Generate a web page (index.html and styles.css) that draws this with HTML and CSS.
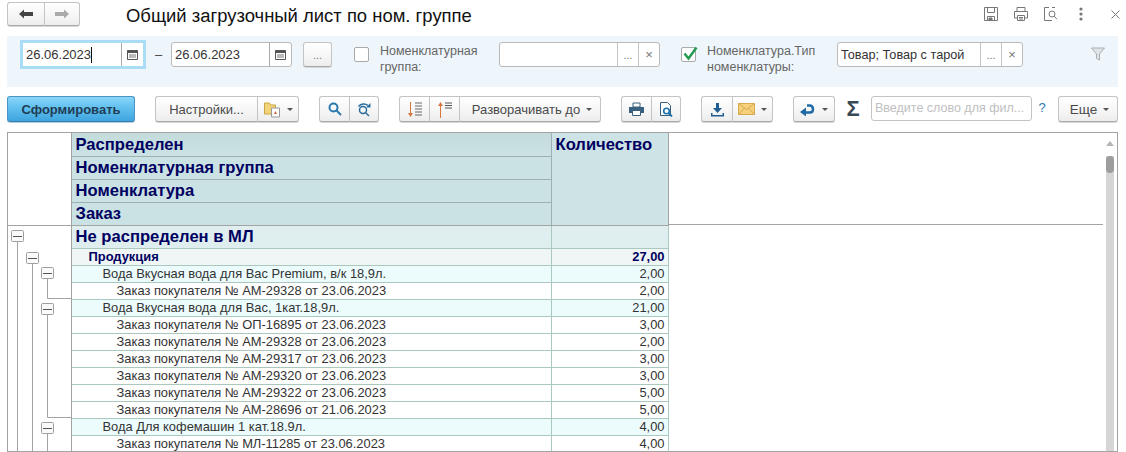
FILE: index.html
```html
<!DOCTYPE html>
<html lang="ru">
<head>
<meta charset="utf-8">
<title>Общий загрузочный лист по ном. группе</title>
<link rel="stylesheet" href="styles.css">
</head>
<body>
<div class="page">
  <header class="titlebar">
    <div class="btn-group nav-group">
      <button class="btn nav-btn"><svg width="14" height="10" viewBox="0 0 14 10"><path d="M0 5l5-4.500V3h9v4H5v2.500z" fill="#444"/></svg></button>
      <button class="btn nav-btn"><svg width="14" height="10" viewBox="0 0 14 10"><path d="M14 5L9 .5V3H0v4h9v2.500z" fill="#aaa"/></svg></button>
    </div>
    <h1 class="title">Общий загрузочный лист по ном. группе</h1>
    <div class="window-tools">
      <svg class="wt wt-save" width="16" height="16" viewBox="0 0 16 16" fill="none" stroke="#777"><path d="M1.500 1.500h13v13h-13z"/><path d="M4.500 1.500v5h7v-5M4.500 14.500v-4h7v4"/><path d="M6 12h3v2H6z" fill="#777"/></svg>
      <svg class="wt wt-print" width="16" height="16" viewBox="0 0 16 16" fill="none" stroke="#777"><path d="M4 5V1.500h8V5M4 12H1.500V5.500h13V12H12"/><path d="M4.500 9.500h7v5h-7z"/><path d="M6 11.500h4M6 13h4"/></svg>
      <svg class="wt wt-find" width="16" height="16" viewBox="0 0 16 16" fill="none" stroke="#777"><path d="M6 1.500H1.500v13H9M9 1.500h3"/><circle cx="9" cy="8" r="3"/><path d="M11.300 10.300l2.700 3"/></svg>
      <svg class="wt wt-more" width="4" height="14" viewBox="0 0 4 14" fill="#777"><circle cx="2" cy="2" r="1.600"/><circle cx="2" cy="7" r="1.600"/><circle cx="2" cy="12" r="1.600"/></svg>
      <svg class="wt wt-close" width="9" height="9" viewBox="0 0 9 9" stroke="#777" stroke-width="1"><path d="M.5.5l8 8M8.500.5l-8 8"/></svg>
    </div>
  </header>

  <section class="filters">
    <div class="field date-field focused">
      <span class="field-value">26.06.2023<i class="caret"></i></span>
      <span class="field-btn cal"><svg width="11" height="11" viewBox="0 0 11 11"><path d="M.5 1.500h10v9H.5z" fill="#fff" stroke="#555"/><path d="M.5 1h10v3H.5z" fill="#555"/><path d="M2 5.500h7v1H2zM2 7.500h7v1H2z" fill="#777"/></svg></span>
    </div>
    <span class="dash">–</span>
    <div class="field date-field second">
      <span class="field-value">26.06.2023</span>
      <span class="field-btn cal"><svg width="11" height="11" viewBox="0 0 11 11"><path d="M.5 1.500h10v9H.5z" fill="#fff" stroke="#555"/><path d="M.5 1h10v3H.5z" fill="#555"/><path d="M2 5.500h7v1H2zM2 7.500h7v1H2z" fill="#777"/></svg></span>
    </div>
    <button class="btn dots-btn">...</button>
    <span class="checkbox cb-first"></span>
    <label class="filter-label lbl-first">Номенклатурная<br>группа:</label>
    <div class="field group-field">
      <span class="field-value"></span>
      <span class="field-btn small">...</span>
      <span class="field-btn small x">×</span>
    </div>
    <span class="checkbox cb-second"><svg width="17" height="15" viewBox="0 0 17 15"><path d="M2.500 7.500l4 5 8-11" fill="none" stroke="#1f9a4e" stroke-width="2.400"/></svg></span>
    <label class="filter-label lbl-second">Номенклатура.Тип<br>номенклатуры:</label>
    <div class="field type-field">
      <span class="field-value">Товар; Товар с тарой</span>
      <span class="field-btn small">...</span>
      <span class="field-btn small x">×</span>
    </div>
    <svg class="funnel" width="14" height="14" viewBox="0 0 14 14"><path d="M.5 1h13L8.500 7v6l-3-1.500V7z" fill="#dfe4e8" stroke="#a9aeb2"/></svg>
  </section>

  <nav class="toolbar">
    <button class="btn primary">Сформировать</button>
    <div class="btn-group g-settings">
      <button class="btn settings">Настройки...</button>
      <button class="btn icon-arrow w42">
        <svg width="17" height="17" viewBox="0 0 17 17"><path d="M.5 4V2h5l1 2h5v9H.5z" fill="#f3d479" stroke="#c9a543"/><path d="M7.500 7h8v9h-8z" fill="#fff" stroke="#999"/><path d="M10 13l1.500-3 1.500 3z" fill="#d2603c"/></svg>
        <i class="arrow"></i>
      </button>
    </div>
    <div class="btn-group g-search">
      <button class="btn icon w30"><svg width="14" height="14" viewBox="0 0 14 14" fill="none" stroke="#2a78b0" stroke-width="2"><circle cx="5.500" cy="5.500" r="4"/><path d="M8.500 8.500l4.500 4.500"/></svg></button>
      <button class="btn icon w30"><svg width="15" height="15" viewBox="0 0 15 15" fill="none" stroke="#2a6d9c" stroke-width="1.500"><circle cx="6" cy="8" r="3.500"/><path d="M8.700 10.700l3.300 3.300M1.500 4.500C4 1.500 8 1 11 3.500"/><path d="M13.500 1v4.500H9z" fill="#2a6d9c" stroke="none"/></svg></button>
    </div>
    <div class="btn-group g-expand">
      <button class="btn icon w30"><svg width="16" height="17" viewBox="0 0 16 17" fill="none"><path d="M3.500 1v13" stroke="#d9743f"/><path d="M1 12l2.500 4L6 12z" fill="#d9743f"/><path d="M8 2h7M8 5h7M8 8h7M8 11h7M8 14h7" stroke="#666"/></svg></button>
      <button class="btn icon w30"><svg width="16" height="17" viewBox="0 0 16 17" fill="none"><path d="M3.500 3v14" stroke="#d9743f"/><path d="M1 5l2.500-4L6 5z" fill="#d9743f"/><path d="M8 2h7M8 4.500h7M8 7h7" stroke="#555"/></svg></button>
      <button class="btn text-arrow expand">Разворачивать до<i class="arrow"></i></button>
    </div>
    <div class="btn-group g-print">
      <button class="btn icon w30"><svg width="15" height="14" viewBox="0 0 15 14"><path d="M4 1h7v4H4z" fill="#fff" stroke="#39607f"/><path d="M0 5h15v6H0z" fill="#39607f"/><path d="M3.500 8.500h8v5h-8z" fill="#fff" stroke="#39607f"/></svg></button>
      <button class="btn icon w30"><svg width="14" height="15" viewBox="0 0 14 15" fill="none"><path d="M1.500.5h7l3 3v10h-10z" fill="#fff" stroke="#39607f"/><circle cx="7.500" cy="9" r="2.800" stroke="#1f73ad" stroke-width="1.600"/><path d="M9.500 11l3.500 3.500" stroke="#1f73ad" stroke-width="2"/></svg></button>
    </div>
    <div class="btn-group g-save">
      <button class="btn icon w31"><svg width="15" height="15" viewBox="0 0 15 15" fill="#1f5f93"><path d="M6 1h3v5h3l-4.500 5L3 6h3z"/><path d="M1 11h1.500v2h10v-2H14v3.500H1z"/></svg></button>
      <button class="btn icon-arrow w41"><svg width="17" height="12" viewBox="0 0 17 12"><path d="M.5.500h16v11H.5z" fill="#f7d07c" stroke="#d8a94f"/><path d="M.5.500l8 6 8-6M.5 11.500l6-6.500M16.500 11.500l-6-6.500" fill="none" stroke="#d8a94f"/></svg><i class="arrow"></i></button>
    </div>
    <button class="btn icon-arrow g-back"><svg width="15" height="13" viewBox="0 0 15 13" fill="none"><path d="M6 9.500h4c4 0 4-6.500 0-7H7" stroke="#1f6aa5" stroke-width="2.400"/><path d="M0 9l6-4.500v9z" fill="#1f6aa5"/></svg><i class="arrow"></i></button>
    <span class="sigma">Σ</span>
    <div class="search-input">Введите слово для фил...</div>
    <span class="help">?</span>
    <button class="btn text-arrow more">Еще<i class="arrow"></i></button>
  </nav>

  <main class="report">
    <div class="sheet">
      <table class="grid">
        <colgroup><col class="c-tree"><col class="c-name"><col class="c-qty"></colgroup>
        <thead>
          <tr><th class="corner" rowspan="4"></th><th class="h">Распределен</th><th class="h h-qty" rowspan="4">Количество</th></tr>
          <tr><th class="h">Номенклатурная группа</th></tr>
          <tr><th class="h">Номенклатура</th></tr>
          <tr><th class="h">Заказ</th></tr>
        </thead>
        <tbody>
          <tr class="r0"><td class="t"></td><td class="n">Не распределен в МЛ</td><td class="q"></td></tr>
          <tr class="r1"><td class="t"></td><td class="n">Продукция</td><td class="q">27,00</td></tr>
          <tr class="r2"><td class="t"></td><td class="n">Вода Вкусная вода для Вас Premium, в/к 18,9л.</td><td class="q">2,00</td></tr>
          <tr class="r3"><td class="t"></td><td class="n">Заказ покупателя № АМ-29328 от 23.06.2023</td><td class="q">2,00</td></tr>
          <tr class="r2"><td class="t"></td><td class="n">Вода Вкусная вода для Вас, 1кат.18,9л.</td><td class="q">21,00</td></tr>
          <tr class="r3"><td class="t"></td><td class="n">Заказ покупателя № ОП-16895 от 23.06.2023</td><td class="q">3,00</td></tr>
          <tr class="r3"><td class="t"></td><td class="n">Заказ покупателя № АМ-29328 от 23.06.2023</td><td class="q">2,00</td></tr>
          <tr class="r3"><td class="t"></td><td class="n">Заказ покупателя № АМ-29317 от 23.06.2023</td><td class="q">3,00</td></tr>
          <tr class="r3"><td class="t"></td><td class="n">Заказ покупателя № АМ-29320 от 23.06.2023</td><td class="q">3,00</td></tr>
          <tr class="r3"><td class="t"></td><td class="n">Заказ покупателя № АМ-29322 от 23.06.2023</td><td class="q">5,00</td></tr>
          <tr class="r3"><td class="t"></td><td class="n">Заказ покупателя № АМ-28696 от 21.06.2023</td><td class="q">5,00</td></tr>
          <tr class="r2"><td class="t"></td><td class="n">Вода Для кофемашин 1 кат.18.9л.</td><td class="q">4,00</td></tr>
          <tr class="r3"><td class="t"></td><td class="n">Заказ покупателя № МЛ-11285 от 23.06.2023</td><td class="q">4,00</td></tr>
        </tbody>
      </table>
      <i class="head-rule"></i>
      <svg class="tree" width="64" height="228" viewBox="0 0 64 228" fill="none">
        <g stroke="#a3a3a3">
          <path d="M9.500 15v213M24.500 35v193M39.500 52v21.500h24M39.500 88v104.500h24M39.500 208v20"/>
        </g>
        <g fill="#fafafa" stroke="#9f9f9f">
          <rect x="3.500" y="5.500" width="12" height="11" rx="1"/>
          <rect x="18.500" y="27.500" width="12" height="11" rx="1"/>
          <rect x="33.500" y="42.500" width="12" height="11" rx="1"/>
          <rect x="33.500" y="78.500" width="12" height="11" rx="1"/>
          <rect x="33.500" y="197.500" width="12" height="11" rx="1"/>
        </g>
        <path d="M5 11.500h9M20 33.500h9M35 48.500h9M35 84.500h9M35 203.500h9" stroke="#555"/>
      </svg>
      <div class="scrollbar">
        <i class="scroll-up"></i>
        <div class="scroll-track"><i class="scroll-thumb"></i></div>
      </div>
    </div>
  </main>
</div>
</body>
</html>
```
FILE: styles.css
```css
* { box-sizing: border-box; }
html, body { margin: 0; padding: 0; height: 100%; overflow: hidden; background: #fff; }
body { font-family: "Liberation Sans", Arial, sans-serif; font-size: 13px; color: #333; }
.page { width: 1126px; height: 452px; display: flex; flex-direction: column; padding: 2px 8px 0 7px; overflow: hidden; }

/* buttons */
.btn {
  font: inherit; color: #4a4a4a; height: 26px; padding: 0; margin: 0;
  display: inline-flex; align-items: center; justify-content: center;
  background: linear-gradient(#fff, #f6f6f6 55%, #ededed);
  border: 1px solid #c4c4c4; border-bottom-color: #a8a8a8; border-radius: 3px;
  box-shadow: 0 1px 0 #d8d8d8;
}
.btn-group { display: flex; flex: none; }
.btn-group .btn { border-radius: 0; border-right-width: 0; }
.btn-group .btn:first-child { border-radius: 3px 0 0 3px; }
.btn-group .btn:last-child { border-radius: 0 3px 3px 0; border-right-width: 1px; }
.arrow { display: inline-block; width: 0; height: 0; border: 3px solid transparent; border-top: 3px solid #555; border-bottom: 0; margin-left: 6px; }

/* title row */
.titlebar { display: flex; align-items: flex-start; height: 34px; flex: none; }
.nav-group { width: 73px; }
.nav-btn { width: 37px; height: 24px; }
.nav-btn:last-child { width: 36px; }
.title { margin: 3px 0 0 46px; font-size: 18.450px; font-weight: 400; color: #111; line-height: 22px; white-space: nowrap; }
.window-tools { margin-left: auto; height: 26px; width: 135px; display: flex; align-items: center; }
.wt { flex: none; margin-top: -2px; }
.wt-print, .wt-find { margin-left: 14px; }
.wt-more { margin-left: 20px; }
.wt-close { margin-left: 28px; }

/* filter band */
.filters { flex: none; height: 51px; background: #eef6fc; display: flex; align-items: flex-start; padding-left: 13px; width: 1111px; position: relative; }
.field { display: flex; height: 25px; background: #fff; border: 1px solid #b9b9b9; border-radius: 3px; margin-top: 6px; flex: none; }
.field-value { flex: 1; padding-left: 3px; line-height: 24px; font-size: 13px; color: #333; white-space: nowrap; overflow: hidden; display: flex; align-items: center; }
.field-btn { flex: none; border-left: 1px solid #c4c4c4; display: flex; align-items: center; justify-content: center; color: #777; }
.field-btn.small { width: 21px; font-size: 11px; }
.field-btn.x { font-size: 13px; }
.date-field { width: 126px; height: 29px; margin-top: 4px; border: 3px solid #a9dcf5; border-radius: 0; }
.date-field .field-btn { border-left-color: #aaa; }
.date-field.second { width: 121px; height: 25px; margin-top: 6px; border: 1px solid #b9b9b9; border-radius: 3px; }
.date-field .cal { width: 22px; }
.caret { display: inline-block; width: 1px; height: 16px; background: #111; }
.dash { width: 25px; text-align: center; line-height: 25px; margin-top: 6px; color: #444; flex: none; }
.dots-btn { width: 29px; height: 25px; margin: 6px 0 0 11px; color: #777; font-size: 11px; flex: none; }
.checkbox { flex: none; width: 15px; height: 15px; margin-top: 11px; background: #fff; border: 1px solid #aaa; border-radius: 2px; display: block; position: relative; }
.checkbox svg { position: absolute; left: 0; top: -2px; }
.cb-first { margin-left: 22px; }
.cb-second { margin-left: 21px; }
.filter-label { flex: none; color: #666; font-size: 12.500px; line-height: 16px; margin: 7px 0 0 11px; white-space: nowrap; }
.lbl-first { width: 119px; }
.lbl-second { width: 130px; }
.group-field { width: 161px; }
.type-field { width: 186px; }
.type-field .field-value { font-size: 12.700px; }
.funnel { position: absolute; left: 1084px; top: 11px; }

/* toolbar */
.toolbar { flex: none; display: flex; align-items: flex-start; height: 45px; padding-top: 9px; }
.primary { width: 128px; font-weight: 700; color: #1f3d55; border-color: #4b93c2; border-bottom-color: #3a7ca8; background: linear-gradient(#8ad6fa, #5dbdec 50%, #3fa5e0); flex: none; box-shadow: 0 1px 0 #b5cfe0; }
.g-settings { margin-left: 20px; }
.settings { width: 102px; }
.w42 { width: 42px; }
.w41 { width: 41px; }
.w30 { width: 30px; }
.w31 { width: 31px; }
.g-search, .g-expand, .g-print, .g-save { margin-left: 20px; }
.expand { width: 142px; padding-left: 4px; }
.g-back { margin-left: 20px; width: 42px; flex: none; }
.g-back .arrow { margin-left: 7px; }
.sigma { flex: none; width: 36px; text-align: center; font-size: 22px; font-weight: 700; color: #3a4a55; line-height: 26px; }
.search-input { flex: none; width: 161px; height: 25px; border: 1px solid #c4c4c4; border-radius: 3px; background: #fff; color: #c0c0c0; font-size: 12.500px; line-height: 23px; padding-left: 3px; white-space: nowrap; overflow: hidden; }
.help { flex: none; width: 20px; text-align: center; color: #2a78b0; font-size: 13px; line-height: 24px; }
.more { flex: none; width: 60px; margin-left: 6px; font-size: 13.500px; padding-left: 3px; }

/* report */
.report { flex: 1; min-height: 0; }
.sheet { position: relative; width: 1111px; height: 320px; border: 1px solid #a3a3a3; overflow: hidden; }
.grid { border-collapse: collapse; table-layout: fixed; width: 660px; color: #333; }
.c-tree { width: 63px; }
.c-name { width: 480px; }
.c-qty { width: 117px; }
.h { height: 23px; padding: 0 0 0 4px; background: #cbe2e5; border: 1px solid #9fb0b0; border-top: 0; font-family: "Liberation Sans", Arial, sans-serif; font-size: 16.600px; font-weight: 700; color: #000060; text-align: left; line-height: 21px; }
thead tr:first-child .h { background: linear-gradient(#c4dbdc, #cbe2e5); }
.h-qty { vertical-align: top; padding-top: 1px; padding-left: 4px; background: #cde3e6; border-right: 1px solid #a3a3a3; border-bottom-color: #a3a3a3; }
thead tr:first-child .h-qty { background: #cde3e6; }
.corner { border-right: 1px solid #a3a3a3; border-bottom: 1px solid #a3a3a3; background: #fff; padding: 0; }
thead tr:last-child .h { border-bottom-color: #a3a3a3; }
td { height: 17px; padding: 0; border: 1px solid #abc8bf; font-size: 12.900px; line-height: 15px; white-space: nowrap; overflow: hidden; }
td.t { border: 0; border-right: 1px solid #a3a3a3; background: #fff; }
td.q { text-align: right; padding-right: 3px; }
td.n { padding-left: 4px; }
.r0 td { height: 23px; }
.r0 .n { font-size: 16.600px; font-weight: 700; color: #000060; }
.r0 .n, .r0 .q { background: linear-gradient(#e0eef0, #deeeef); }
.r1 .n, .r1 .q { background: #eff6f5; font-weight: 700; color: #000060; }
.r1 .n { padding-left: 17px; }
.r2 .n, .r2 .q { background: #ecfcfd; }
.r2 .n { padding-left: 31px; }
.r3 .n { padding-left: 45px; }
.head-rule { position: absolute; left: 660px; top: 91px; width: 435px; height: 1px; background: #a3a3a3; }
.tree { position: absolute; left: 0; top: 92px; }
.scrollbar { position: absolute; left: 1098px; top: 0; width: 9px; height: 100%; }
.scroll-up { position: absolute; left: 0; top: 8px; width: 0; height: 0; border: 4px solid transparent; border-top: 0; border-bottom: 5px solid #b5b5b5; }
.scroll-track { position: absolute; left: 0; top: 23px; bottom: 0; width: 8px; background: #d6d6d6; }
.scroll-thumb { position: absolute; left: 0; top: 0; width: 8px; height: 17px; background: #9d9d9d; border-radius: 4px; display: block; }
```
